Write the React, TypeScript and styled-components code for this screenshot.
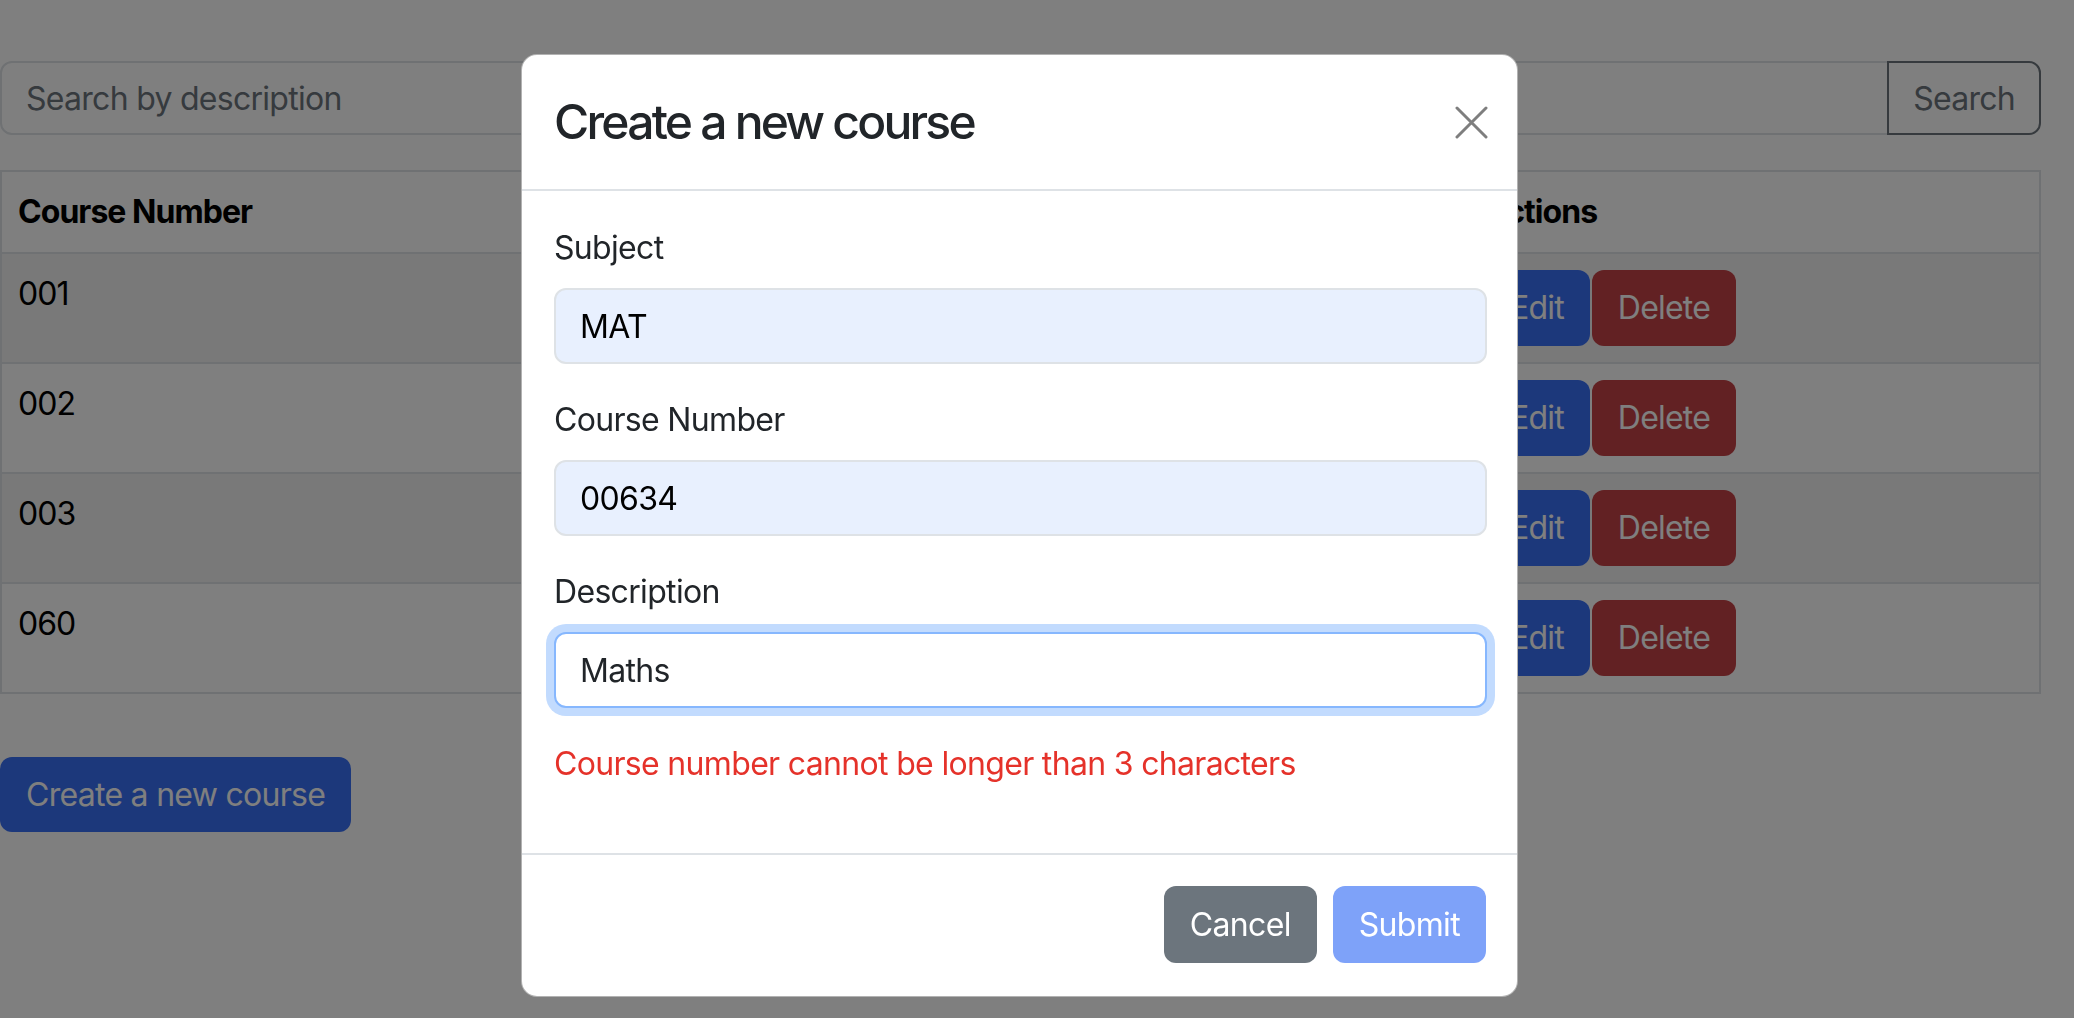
import React from 'react';
import styled, { createGlobalStyle } from 'styled-components';

const GlobalStyle = createGlobalStyle`
    body {
        margin: 0;
        font-family: Inter, "Noto Sans", sans-serif;
        color: #212529;
        background: #fff;
        overflow: hidden;
    }
    * {
        box-sizing: border-box;
    }
    input,
    button {
        letter-spacing: inherit;
    }
`;

const Page = styled.div`
    padding: 61px 33px 0 0;
    letter-spacing: -0.045em;
`;

const SearchGroup = styled.div`
    display: flex;
    height: 74px;
`;

const SearchInput = styled.input`
    flex: 1;
    height: 100%;
    border: 2px solid #dee2e6;
    border-radius: 12px 0 0 12px;
    padding: 12px 24px;
    font: inherit;
    font-size: 32px;
    color: #212529;
    outline: none;

    &::placeholder {
        color: #6c757d;
    }
`;

const SearchButton = styled.button`
    height: 100%;
    margin-left: -2px;
    padding: 12px 24px;
    border: 2px solid #6c757d;
    border-radius: 0 12px 12px 0;
    background: transparent;
    color: #6c757d;
    font: inherit;
    font-size: 32px;
`;

const Table = styled.table`
    width: 100%;
    margin-top: 35px;
    border-collapse: collapse;
    border: 2px solid #dee2e6;
    font-size: 32px;
    line-height: 48px;
    color: #000;
    letter-spacing: -0.03em;

    th,
    td {
        padding: 16px;
        text-align: left;
        vertical-align: top;
        border-bottom: 2px solid #dee2e6;
    }

    th {
        font-weight: 700;
    }
`;

const Row = styled.tr<{ $striped: boolean }>`
    background: ${(p) => (p.$striped ? 'rgba(0, 0, 0, 0.05)' : 'transparent')};
`;

type Variant = 'primary' | 'danger' | 'secondary' | 'disabled';

const colors: Record<Variant, string> = {
    primary: '#3970f6',
    danger: '#c44246',
    secondary: '#6c757d',
    disabled: '#7ea2f9',
};

const Button = styled.button<{ $variant: Variant }>`
    height: 76px;
    padding: 12px 24px;
    border: 2px solid transparent;
    border-radius: 12px;
    font: inherit;
    font-size: 32px;
    line-height: 48px;
    color: #fff;
    background: ${(p) => colors[p.$variant]};
`;

const Actions = styled.div`
    display: flex;
    gap: 2px;
    letter-spacing: -0.025em;
`;

const CreateButton = styled(Button)`
    margin-top: 63px;
    height: 75px;
`;

const Backdrop = styled.div`
    position: fixed;
    inset: 0;
    background: rgba(0, 0, 0, 0.5);
`;

const Modal = styled.div`
    position: fixed;
    top: 54px;
    left: 521px;
    width: 997px;
    background: #fff;
    border: 1px solid rgba(0, 0, 0, 0.3);
    border-radius: 16px;
    letter-spacing: -0.042em;
`;

const ModalHeader = styled.div`
    display: flex;
    align-items: center;
    justify-content: space-between;
    padding: 31px 29px 31px 32px;
    border-bottom: 2px solid #dee2e6;
`;

const Title = styled.h4`
    margin: 0;
    font-size: 48px;
    line-height: 72px;
    font-weight: 500;
    letter-spacing: -0.058em;
    color: #212529;
`;

const CloseButton = styled.button`
    width: 33px;
    height: 33px;
    padding: 0;
    border: none;
    background: transparent;
    opacity: 0.5;
    display: flex;
`;

const ModalBody = styled.div`
    padding: 33px 30px 33px 32px;
`;

const Field = styled.div`
    margin-bottom: 32px;
`;

const Label = styled.label`
    display: block;
    margin-bottom: 16px;
    font-size: 32px;
    line-height: 48px;
    color: #212529;
`;

const FormInput = styled.input<{ $autofill?: boolean; $focused?: boolean }>`
    display: block;
    width: 100%;
    height: 76px;
    padding: 12px 24px;
    border: 2px solid ${(p) => (p.$focused ? '#86b7fe' : '#dee2e6')};
    border-radius: 12px;
    background: ${(p) => (p.$autofill ? '#e8f0fe' : '#fff')};
    box-shadow: ${(p) => (p.$focused ? '0 0 0 8px rgba(13, 110, 253, 0.25)' : 'none')};
    font: inherit;
    font-size: 32px;
    color: ${(p) => (p.$autofill ? '#000' : '#212529')};
    outline: none;
`;

const ErrorText = styled.div`
    margin-bottom: 32px;
    font-size: 32px;
    line-height: 48px;
    color: #e5322a;
`;

const ModalFooter = styled.div`
    display: flex;
    justify-content: flex-end;
    gap: 16px;
    padding: 31px 31px 33px;
    border-top: 2px solid #dee2e6;
`;

const FooterButton = styled(Button)`
    height: 77px;
`;

const courses = ['001', '002', '003', '060'];

function CloseIcon() {
    return (
        <svg width="33" height="33" viewBox="0 0 33 33">
            <path d="M2 2 L31 31 M31 2 L2 31" stroke="#000" strokeWidth="3" strokeLinecap="round" />
        </svg>
    );
}

export default function App() {
    return (
        <>
            <GlobalStyle />
            <Page>
                <SearchGroup>
                    <SearchInput placeholder="Search by description" />
                    <SearchButton>Search</SearchButton>
                </SearchGroup>
                <Table>
                    <colgroup>
                        <col style={{ width: 1467 }} />
                        <col />
                    </colgroup>
                    <thead>
                        <tr>
                            <th>Course Number</th>
                            <th>Actions</th>
                        </tr>
                    </thead>
                    <tbody>
                        {courses.map((number, i) => (
                            <Row key={number} $striped={i % 2 === 0}>
                                <td>{number}</td>
                                <td>
                                    <Actions>
                                        <Button $variant="primary">Edit</Button>
                                        <Button $variant="danger">Delete</Button>
                                    </Actions>
                                </td>
                            </Row>
                        ))}
                    </tbody>
                </Table>
                <CreateButton $variant="primary">Create a new course</CreateButton>
            </Page>
            <Backdrop />
            <Modal>
                <ModalHeader>
                    <Title>Create a new course</Title>
                    <CloseButton aria-label="Close">
                        <CloseIcon />
                    </CloseButton>
                </ModalHeader>
                <ModalBody>
                    <Field>
                        <Label>Subject</Label>
                        <FormInput $autofill defaultValue="MAT" />
                    </Field>
                    <Field>
                        <Label>Course Number</Label>
                        <FormInput $autofill defaultValue="00634" />
                    </Field>
                    <Field>
                        <Label>Description</Label>
                        <FormInput $focused defaultValue="Maths" />
                    </Field>
                    <ErrorText>Course number cannot be longer than 3 characters</ErrorText>
                </ModalBody>
                <ModalFooter>
                    <FooterButton $variant="secondary">Cancel</FooterButton>
                    <FooterButton $variant="disabled">Submit</FooterButton>
                </ModalFooter>
            </Modal>
        </>
    );
}
